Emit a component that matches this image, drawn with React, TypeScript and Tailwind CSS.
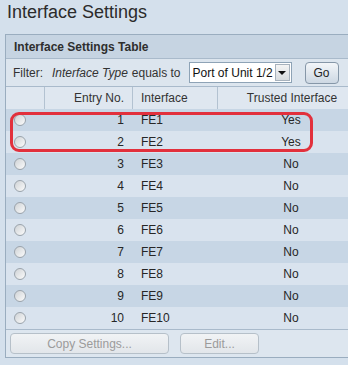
import React from 'react';

const rows = Array.from({ length: 10 }, (_, i) => ({
  entry: i + 1,
  iface: `FE${i + 1}`,
  trusted: i < 2 ? 'Yes' : 'No',
}));

function Radio() {
  return (
    <span className="block w-[12px] h-[12px] rounded-full border border-[#9aa3ab] bg-linear-to-br from-[#cfd3d6] to-[#fbfbfb]" />
  );
}

export default function App() {
  return (
    <div className="relative w-[348px] h-[365px] overflow-hidden bg-[#d4e0ec] font-['Liberation_Sans',Arial,sans-serif] text-[12px] text-[#262626]">
      <h1 className="pl-[7px] pt-[1px] text-[18px] leading-[22px] text-[#2b2b2b]">Interface Settings</h1>

      <div className="mt-[11px] ml-[5px] w-[372px] border border-[#9aadbf]">
        <div className="h-[24px] flex items-center pl-[8px] bg-[#c6d4e2] border-b border-[#a9bacb] font-bold text-[#2e2e2e]">
          Interface Settings Table
        </div>

        <div className="h-[28px] flex items-center pl-[7px] bg-[#dce5ee] border-b border-[#a9bacb] text-[#333]">
          <span>Filter:</span>
          <span className="ml-[9px] italic">Interface Type</span>
          <span className="ml-[4px]">equals to</span>
          <div className="ml-[8px] w-[103px] h-[21px] flex items-center bg-white border border-[#8ea3b6]">
            <span className="flex-1 pl-[3px] text-[#111]">Port of Unit 1/2</span>
            <span className="w-[15px] h-[17px] mr-[1px] flex items-center justify-center border border-[#a7b2bd] bg-linear-to-b from-[#f4f4f4] to-[#d8dcdf]">
              <span className="w-0 h-0 border-l-[4px] border-r-[4px] border-t-[4px] border-l-transparent border-r-transparent border-t-[#111]" />
            </span>
          </div>
          <button className="ml-[13px] w-[34px] h-[22px] rounded-[4px] border border-[#8697a8] bg-linear-to-b from-[#f3f6f9] to-[#cdd8e3] text-[#222]">
            Go
          </button>
        </div>

        <div className="grid grid-cols-[39px_88px_85px_1fr]">
          <div className="h-[22px] bg-[#dfe7f0] border-r border-[#b3c2d1]" />
          <div className="h-[22px] bg-[#dfe7f0] border-r border-[#b3c2d1] flex items-center justify-end pr-[8px] text-[#333]">Entry No.</div>
          <div className="h-[22px] bg-[#dfe7f0] border-r border-[#b3c2d1] flex items-center pl-[8px] text-[#333]">Interface</div>
          <div className="h-[22px] bg-[#dfe7f0] flex items-center justify-center pr-[10px] text-[#333]">Trusted Interface</div>

          {rows.map((r) => {
            const bg = r.entry % 2 === 1 ? 'bg-[#c7d6e5]' : 'bg-[#d9e3ee]';
            return (
              <React.Fragment key={r.entry}>
                <div className={`h-[22px] ${bg} flex items-center pl-[8px]`}>
                  <Radio />
                </div>
                <div className={`h-[22px] ${bg} flex items-center justify-end pr-[9px]`}>{r.entry}</div>
                <div className={`h-[22px] ${bg} flex items-center pl-[8px]`}>{r.iface}</div>
                <div className={`h-[22px] ${bg} flex items-center justify-center pr-[12px]`}>{r.trusted}</div>
              </React.Fragment>
            );
          })}
        </div>

        <div className="h-[28px] flex items-center gap-[11px] pl-[4px] bg-[#dde6ef] border-t border-[#a9bacb]">
          <button className="w-[159px] h-[21px] rounded-[4px] border border-[#b6c0c9] bg-linear-to-b from-[#f1f3f5] to-[#e2e6ea] text-[#9b9b9b]">
            Copy Settings...
          </button>
          <button className="w-[79px] h-[21px] rounded-[4px] border border-[#b6c0c9] bg-linear-to-b from-[#f1f3f5] to-[#e2e6ea] text-[#9b9b9b]">
            Edit...
          </button>
        </div>
      </div>

      <div className="absolute left-[10px] top-[112px] w-[303px] h-[40px] rounded-[9px] border-[3px] border-[#e2303c] pointer-events-none" />
    </div>
  );
}
